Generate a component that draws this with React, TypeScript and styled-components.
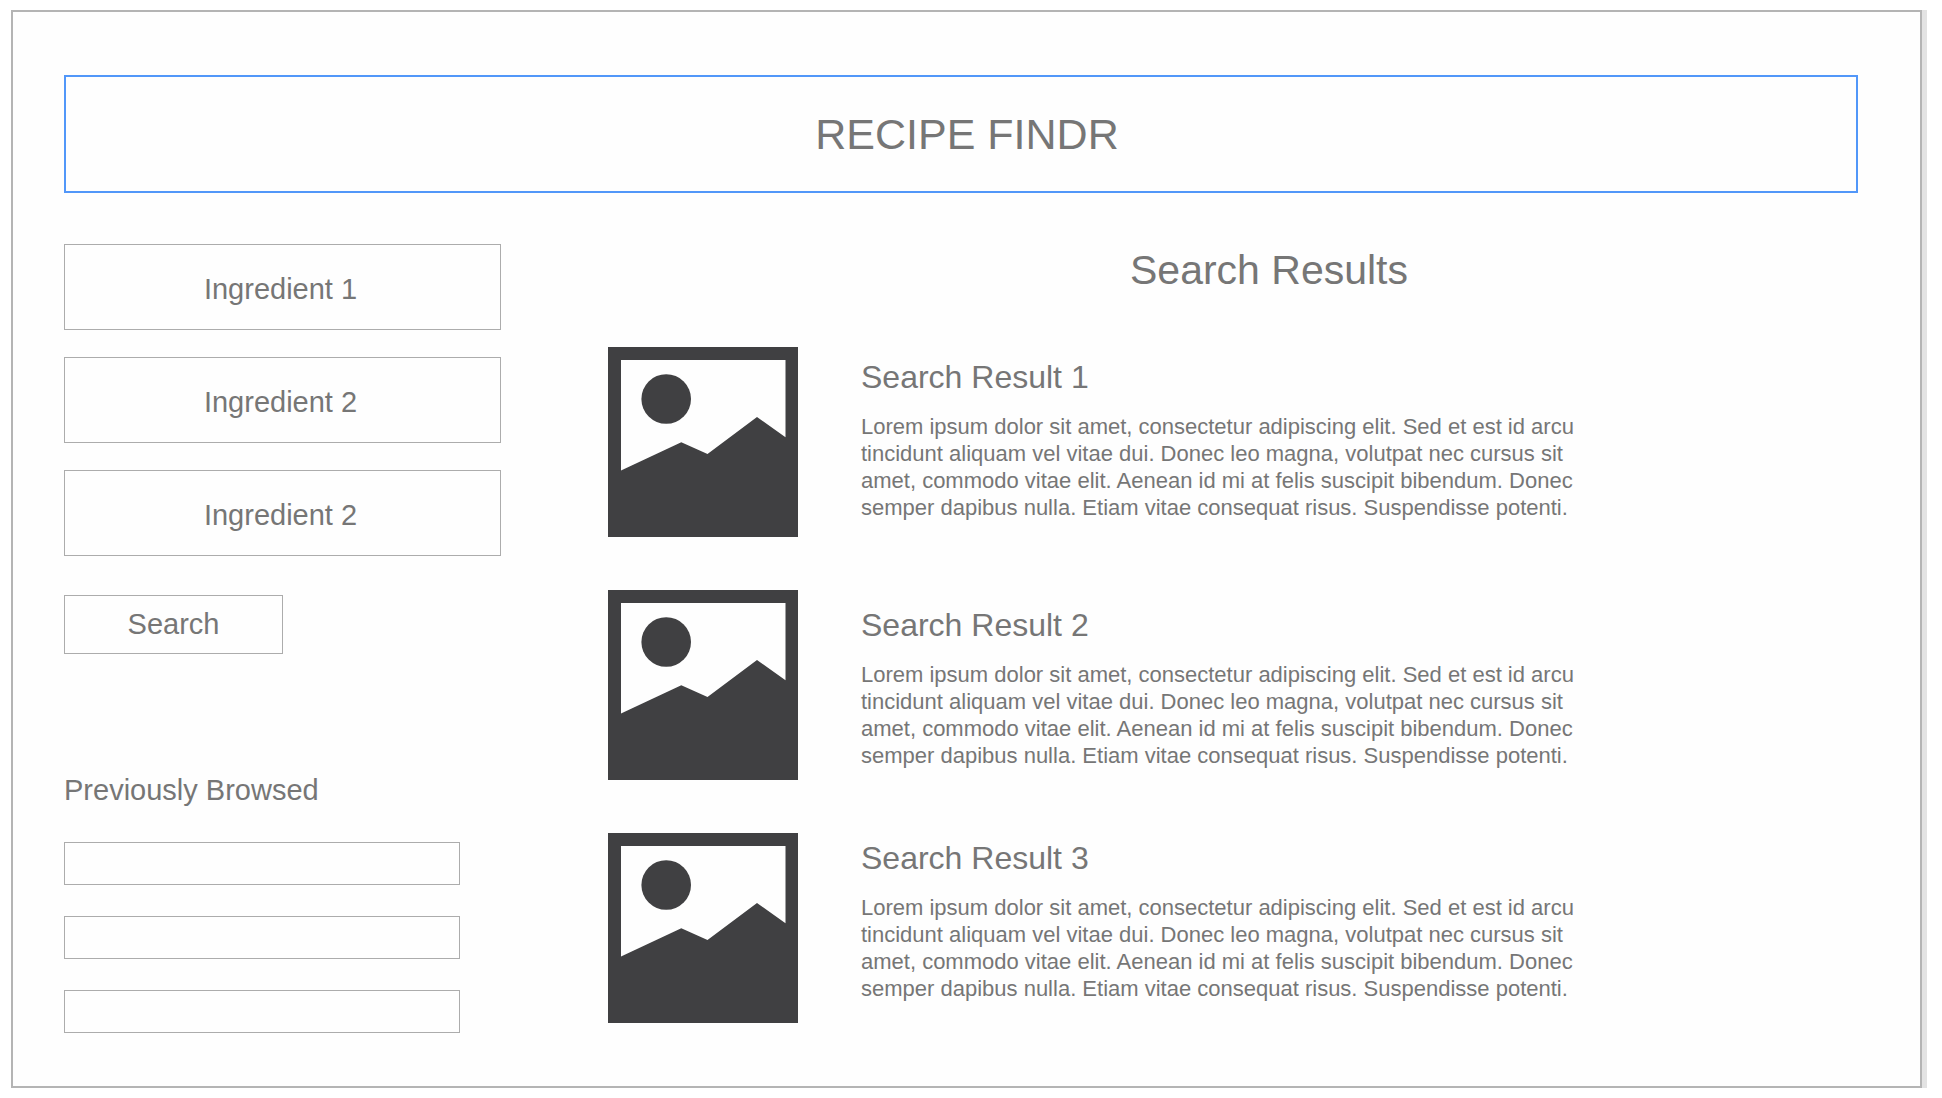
import React from "react";
import styled, { createGlobalStyle } from "styled-components";

const ink = "#767676";
const line = "#acacac";

const GlobalStyle = createGlobalStyle`
  *, *::before, *::after { box-sizing: border-box; }
  body {
    margin: 0;
    background: #ffffff;
    color: ${ink};
    font-family: "Liberation Sans", Arial, sans-serif;
  }
  h1, h2, h3, p, ul { margin: 0; padding: 0; font-weight: 400; }
`;

const Page = styled.div`
  padding: 10px 20px 10px 11px;
`;

const Frame = styled.div`
  padding: 63px 62px 53px 51px;
  border: 2px solid #b4b4b4;
  background: #fefefe;
  box-shadow: 5px 0 0 #e3e3e3;
`;

const Header = styled.header`
  display: flex;
  align-items: center;
  justify-content: center;
  min-height: 118px;
  padding-left: 12px;
  border: 2px solid #5297f9;
`;

const Title = styled.h1`
  font-size: 43px;
  line-height: 52px;
`;

const Columns = styled.div`
  display: grid;
  grid-template-columns: 437px minmax(0, 1fr);
  column-gap: 107px;
  margin-top: 51px;
`;

const SearchForm = styled.form`
  display: flex;
  flex-direction: column;
  align-items: flex-start;
  gap: 27px;
`;

const IngredientInput = styled.input`
  width: 100%;
  height: 86px;
  padding: 4px 4px 0 0;
  border: 1px solid ${line};
  border-radius: 0;
  background: transparent;
  color: ${ink};
  font: inherit;
  font-size: 29px;
  text-align: center;
  &::placeholder { color: ${ink}; opacity: 1; }
`;

const SearchButton = styled.button`
  width: 219px;
  height: 59px;
  margin-top: 12px;
  padding: 0;
  border: 1px solid ${line};
  background: transparent;
  color: ${ink};
  font: inherit;
  font-size: 29px;
`;

const History = styled.section`
  margin-top: 118px;
`;

const HistoryTitle = styled.h2`
  font-size: 29px;
  line-height: 36px;
`;

const HistoryList = styled.ul`
  display: grid;
  gap: 31px;
  width: 396px;
  margin-top: 34px;
  list-style: none;
`;

const HistoryItem = styled.li`
  height: 43px;
  border: 1px solid ${line};
`;

const ResultsTitle = styled.h2`
  padding-left: 72px;
  font-size: 41px;
  line-height: 52px;
  text-align: center;
`;

const ResultList = styled.div`
  display: grid;
  gap: 53px;
  margin-top: 51px;
`;

const Result = styled.article<{ $align: string }>`
  display: flex;
  align-items: ${(p) => p.$align};
  gap: 63px;
`;

const Thumbnail = styled.svg`
  flex: none;
  align-self: flex-start;
  display: block;
  width: 190px;
  height: 190px;
`;

const ResultText = styled.div`
  max-width: 740px;
  padding: 5px 0 11px;
`;

const ResultTitle = styled.h3`
  font-size: 32px;
  line-height: 40px;
`;

const Summary = styled.p`
  margin-top: 16px;
  font-size: 22px;
  line-height: 27px;
`;

const lorem =
  "Lorem ipsum dolor sit amet, consectetur adipiscing elit. Sed et est id arcu tincidunt aliquam vel vitae dui. Donec leo magna, volutpat nec cursus sit amet, commodo vitae elit. Aenean id mi at felis suscipit bibendum. Donec semper dapibus nulla. Etiam vitae consequat risus. Suspendisse potenti.";

const ingredients = ["Ingredient 1", "Ingredient 2", "Ingredient 2"];

const results = [
  { title: "Search Result 1", align: "center" },
  { title: "Search Result 2", align: "flex-end" },
  { title: "Search Result 3", align: "flex-start" },
];

function Picture() {
  return (
    <Thumbnail viewBox="0 0 190 190" role="img" aria-label="Recipe photo">
      <rect width="190" height="190" fill="#404042" />
      <polygon points="13,13 177.5,13 177.5,90.3 149,70 99.5,107 73.3,95.3 13,123.5" fill="#fefefe" />
      <circle cx="58.2" cy="52" r="24.8" fill="#404042" />
    </Thumbnail>
  );
}

export default function App() {
  return (
    <>
      <GlobalStyle />
      <Page>
        <Frame>
          <Header>
            <Title>RECIPE FINDR</Title>
          </Header>
          <Columns>
            <aside>
              <SearchForm onSubmit={(e) => e.preventDefault()}>
                {ingredients.map((name, i) => (
                  <IngredientInput key={i} type="text" placeholder={name} aria-label={name} />
                ))}
                <SearchButton type="submit">Search</SearchButton>
              </SearchForm>
              <History>
                <HistoryTitle>Previously Browsed</HistoryTitle>
                <HistoryList>
                  <HistoryItem />
                  <HistoryItem />
                  <HistoryItem />
                </HistoryList>
              </History>
            </aside>
            <main>
              <ResultsTitle>Search Results</ResultsTitle>
              <ResultList>
                {results.map((r) => (
                  <Result key={r.title} $align={r.align}>
                    <Picture />
                    <ResultText>
                      <ResultTitle>{r.title}</ResultTitle>
                      <Summary>{lorem}</Summary>
                    </ResultText>
                  </Result>
                ))}
              </ResultList>
            </main>
          </Columns>
        </Frame>
      </Page>
    </>
  );
}
